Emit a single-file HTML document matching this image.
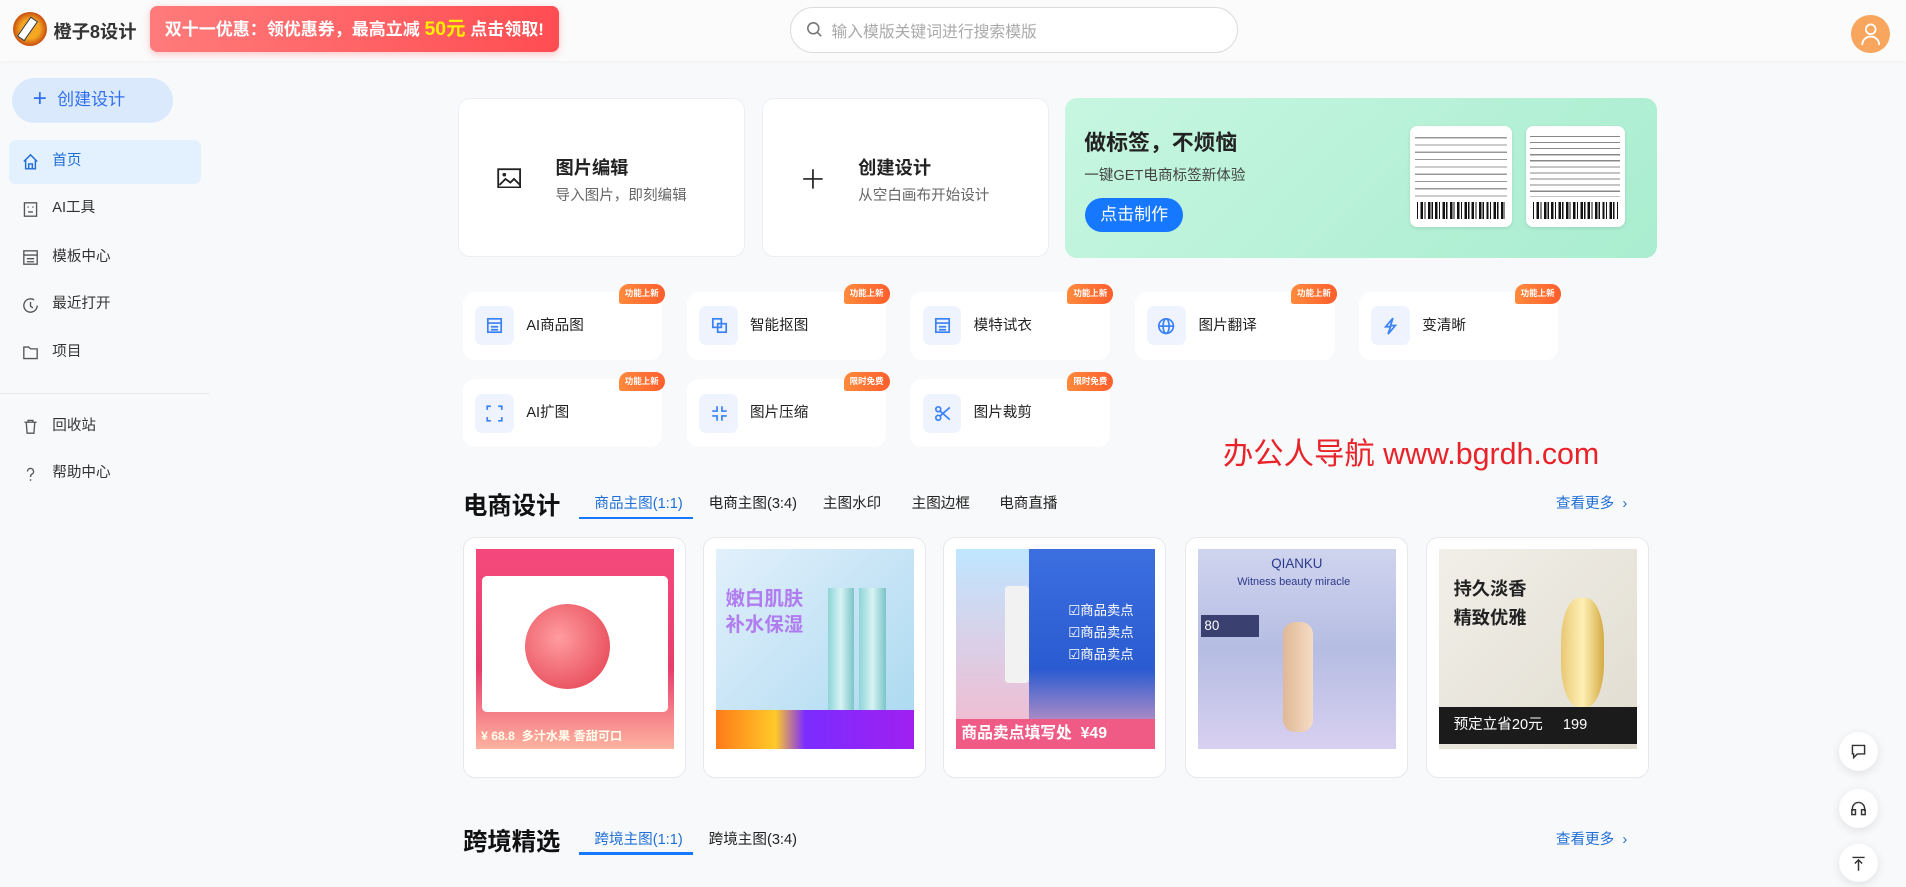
<!DOCTYPE html>
<html><head><meta charset="utf-8">
<style>
html,body{margin:0;padding:0;}
body{width:1568px;height:717px;overflow:hidden;zoom:1.21556;background:#f8f9fb;font-family:"Liberation Sans","Noto Sans CJK SC",sans-serif;color:#222;position:relative}
.a{position:absolute}
.hdr{left:0;top:0;width:1568px;height:50px;background:#fbfbfc;box-shadow:0 1px 3px rgba(0,0,0,.04)}
.promo{left:123px;top:5px;width:337px;height:38px;border-radius:6px;background:linear-gradient(90deg,#ff7b7b,#ff4d52);color:#fff;font-weight:bold;font-size:14px;line-height:38px;text-align:center;box-shadow:0 2px 6px rgba(255,80,80,.3)}
.search{left:650px;top:6px;width:367px;height:36px;border:1px solid #dcdcdc;border-radius:19px;background:#fff}
.nav{left:7px;width:158px;height:36px;line-height:36px;font-size:12px;color:#333;border-radius:6px}
.nav svg{position:absolute;left:11px;top:11px}
.nav span.t{position:absolute;left:36px}
.card{background:#fff;border:1px solid #eceef2;border-radius:10px}
.tool{width:164px;height:56px;background:#fff;border-radius:10px}
.tool .ib{position:absolute;left:10px;top:12px;width:32px;height:32px;background:#eef3fe;border-radius:6px}
.tool .tt{position:absolute;left:52px;top:0;line-height:56px;font-size:12px;color:#222}
.badge{width:38px;height:16px;border-radius:8px 8px 8px 2px;background:linear-gradient(90deg,#ff8a3c,#ff5e2c);color:#fff;font-size:7px;font-weight:bold;line-height:16px;text-align:center;white-space:nowrap;overflow:hidden}
.sec{font-size:20px;font-weight:bold;color:#111}
.tab{font-size:12px;color:#222}
.pc{width:182px;height:196px;background:#fff;border:1px solid #e6e8ec;border-radius:10px}
.pimg{position:absolute;left:10px;top:9px;width:163px;height:164px;overflow:hidden}
.fb{width:32px;height:32px;border-radius:50%;background:#fff;box-shadow:0 2px 8px rgba(0,0,0,.1);text-align:center;line-height:32px;font-size:13px}
.ic{stroke:#3b82f6;fill:none;stroke-width:1.4}
</style></head><body>
<div class="a hdr"></div>
<div class="a" style="left:11px;top:10px;width:28px;height:28px;border-radius:50%;background:radial-gradient(circle,#f5a623 40%,#c2410c 75%,#6b2b0a);"></div>
<div class="a" style="left:19px;top:14px;width:6px;height:18px;background:#fff;border:1px solid #333;transform:rotate(35deg)"></div>
<div class="a" style="left:44px;top:15px;font-size:15px;font-weight:bold;color:#333">橙子8设计</div>
<div class="a promo">双十一优惠：领优惠券，最高立减 <span style="color:#ffee00;font-size:16px">50元</span> 点击领取!</div>
<div class="a search"></div>
<svg class="a" style="left:663px;top:17px" width="14" height="14" viewBox="0 0 14 14"><circle cx="6" cy="6" r="4.5" fill="none" stroke="#777" stroke-width="1.3"/><line x1="9.3" y1="9.3" x2="12.5" y2="12.5" stroke="#777" stroke-width="1.3"/></svg>
<div class="a" style="left:684px;top:16px;font-size:13px;color:#aaa">输入模版关键词进行搜索模版</div>
<div class="a" style="left:1523px;top:12px;width:32px;height:32px;border-radius:50%;background:#f8a55e"></div>
<svg class="a" style="left:1531px;top:18px" width="16" height="20" viewBox="0 0 16 20"><circle cx="8" cy="6" r="4" fill="none" stroke="#fff" stroke-width="1.5"/><path d="M1 19c0-4 3-7 7-7s7 3 7 7" fill="none" stroke="#fff" stroke-width="1.5"/></svg>

<div class="a" style="left:10px;top:64px;width:132px;height:37px;border-radius:19px;background:#dbe9fd;color:#2f6fec;font-size:14px;line-height:37px"><span style="position:absolute;left:17px;font-size:20px;top:-1px">+</span><span style="position:absolute;left:37px">创建设计</span></div>
<div class="a nav" style="top:115px;background:#e3f0fd;color:#1f6fd6"><svg width="14" height="14" viewBox="0 0 14 14"><path d="M1.5 7L7 1.5 12.5 7M3 6v7h8V6M5.5 13V9h3v4" fill="none" stroke="#1f6fd6" stroke-width="1.2"/></svg><span class="t">首页</span></div>
<div class="a nav" style="top:154px"><svg width="14" height="14" viewBox="0 0 14 14"><rect x="2" y="1.5" width="10" height="11" fill="none" stroke="#555" stroke-width="1.1"/><path d="M4.5 5h1M8.5 5h1M5 9h4" stroke="#555" stroke-width="1.1"/></svg><span class="t">AI工具</span></div>
<div class="a nav" style="top:194px"><svg width="14" height="14" viewBox="0 0 14 14"><rect x="1.5" y="1.5" width="11" height="11" fill="none" stroke="#555" stroke-width="1.1"/><path d="M1.5 5h11M4 8h6M4 10.5h6" stroke="#555" stroke-width="1.1"/></svg><span class="t">模板中心</span></div>
<div class="a nav" style="top:233px"><svg width="14" height="14" viewBox="0 0 14 14"><path d="M12.5 7A5.5 5.5 0 1 1 10 2.4" fill="none" stroke="#555" stroke-width="1.1"/><path d="M7 4v3.5l2 1.5" fill="none" stroke="#555" stroke-width="1.1"/></svg><span class="t">最近打开</span></div>
<div class="a nav" style="top:272px"><svg width="14" height="14" viewBox="0 0 14 14"><path d="M1.5 2.5h4l1.5 1.5h5.5v8h-11z" fill="none" stroke="#555" stroke-width="1.1"/></svg><span class="t">项目</span></div>
<div class="a" style="left:0;top:323px;width:172px;height:1px;background:#e8e8e8"></div>
<div class="a nav" style="top:333px"><svg width="14" height="14" viewBox="0 0 14 14"><path d="M2 3.5h10M5 3.5V2h4v1.5M3.5 3.5l.7 9h5.6l.7-9" fill="none" stroke="#555" stroke-width="1.1"/></svg><span class="t">回收站</span></div>
<div class="a nav" style="top:372px"><svg width="14" height="14" viewBox="0 0 14 14"><path d="M4.5 4.5a2.5 2.5 0 1 1 3.5 2.3C7.2 7.2 7 7.8 7 9" fill="none" stroke="#555" stroke-width="1.1"/><circle cx="7" cy="11.5" r=".7" fill="#555"/></svg><span class="t">帮助中心</span></div>

<div class="a card" style="left:377px;top:81px;width:234px;height:129px"></div>
<svg class="a" style="left:409px;top:138px" width="20" height="17" viewBox="0 0 20 17"><rect x="1" y="1" width="18" height="15" fill="none" stroke="#222" stroke-width="1.5"/><circle cx="6" cy="5.5" r="1.5" fill="#222"/><path d="M2 14l5-5 4 3 3-3 5 5" fill="none" stroke="#222" stroke-width="1.5"/></svg>
<div class="a" style="left:457px;top:127px;font-size:15px;font-weight:bold">图片编辑</div>
<div class="a" style="left:457px;top:151px;font-size:12px;color:#666">导入图片，即刻编辑</div>
<div class="a card" style="left:627px;top:81px;width:234px;height:129px"></div>
<svg class="a" style="left:660px;top:138px" width="18" height="18" viewBox="0 0 18 18"><path d="M9 1v16M1 9h16" stroke="#222" stroke-width="1.4"/></svg>
<div class="a" style="left:706px;top:127px;font-size:15px;font-weight:bold">创建设计</div>
<div class="a" style="left:706px;top:151px;font-size:12px;color:#666">从空白画布开始设计</div>
<div class="a" style="left:876px;top:81px;width:487px;height:131px;border-radius:10px;background:linear-gradient(135deg,#c7f6e1,#a9edcf)"></div>
<div class="a" style="left:892px;top:104px;font-size:18px;font-weight:bold;color:#222">做标签，不烦恼</div>
<div class="a" style="left:892px;top:135px;font-size:12px;color:#444">一键GET电商标签新体验</div>
<div class="a" style="left:893px;top:163px;width:80px;height:28px;border-radius:14px;background:#1677ff;color:#fff;font-size:14px;line-height:28px;text-align:center">点击制作</div>
<div class="a" style="left:1160px;top:104px;width:84px;height:83px;background:#fff;border-radius:6px;box-shadow:0 1px 3px rgba(0,0,0,.1);overflow:hidden"><div style="margin:4px;height:54px;background:repeating-linear-gradient(180deg,#fff 0 5px,#999 5px 6px)"></div><div style="margin:2px 6px;height:14px;background:repeating-linear-gradient(90deg,#111 0 1px,#fff 1px 3px,#111 3px 5px,#fff 5px 6px)"></div></div>
<div class="a" style="left:1255px;top:104px;width:82px;height:83px;background:#fff;border-radius:6px;box-shadow:0 1px 3px rgba(0,0,0,.1);overflow:hidden"><div style="margin:4px;height:54px;background:repeating-linear-gradient(180deg,#fff 0 4px,#888 4px 5px)"></div><div style="margin:2px 6px;height:14px;background:repeating-linear-gradient(90deg,#111 0 1px,#fff 1px 3px,#111 3px 5px,#fff 5px 6px)"></div></div>

<!-- tools -->
<div class="a tool" style="left:381px;top:240px"><div class="ib"></div><div class="tt">AI商品图</div></div>
<div class="a tool" style="left:565px;top:240px"><div class="ib"></div><div class="tt">智能抠图</div></div>
<div class="a tool" style="left:749px;top:240px"><div class="ib"></div><div class="tt">模特试衣</div></div>
<div class="a tool" style="left:934px;top:240px"><div class="ib"></div><div class="tt">图片翻译</div></div>
<div class="a tool" style="left:1118px;top:240px"><div class="ib"></div><div class="tt">变清晰</div></div>
<div class="a tool" style="left:381px;top:312px"><div class="ib"></div><div class="tt">AI扩图</div></div>
<div class="a tool" style="left:565px;top:312px"><div class="ib"></div><div class="tt">图片压缩</div></div>
<div class="a tool" style="left:749px;top:312px"><div class="ib"></div><div class="tt">图片裁剪</div></div>
<svg class="a" style="left:400px;top:261px" width="14" height="14"><rect class="ic" x="1.5" y="1.5" width="11" height="11"/><path class="ic" d="M1.5 5h11M4 8h6M4 10.5h6"/></svg>
<svg class="a" style="left:585px;top:261px" width="14" height="14"><rect class="ic" x="1.5" y="1.5" width="7" height="7"/><rect class="ic" x="5.5" y="5.5" width="7" height="7"/></svg>
<svg class="a" style="left:768px;top:261px" width="14" height="14"><rect class="ic" x="1.5" y="1.5" width="11" height="11"/><path class="ic" d="M1.5 5h11M4 8h6M4 10.5h6"/></svg>
<svg class="a" style="left:952px;top:261px" width="15" height="15"><circle class="ic" cx="7.5" cy="7.5" r="6"/><ellipse class="ic" cx="7.5" cy="7.5" rx="2.5" ry="6"/><path class="ic" d="M1.5 7.5h12"/></svg>
<svg class="a" style="left:1137px;top:261px" width="14" height="15"><path class="ic" d="M9 1L3 8h4l-2 6 6-7H7z"/></svg>
<svg class="a" style="left:400px;top:333px" width="14" height="14"><path class="ic" d="M1 4V1h3M10 1h3v3M13 10v3h-3M4 13H1v-3"/></svg>
<svg class="a" style="left:585px;top:333px" width="14" height="14"><path class="ic" d="M5 1v4H1M9 1v4h4M5 13V9H1M9 13V9h4"/></svg>
<svg class="a" style="left:768px;top:333px" width="14" height="14"><circle class="ic" cx="3.5" cy="3.5" r="2"/><circle class="ic" cx="3.5" cy="10.5" r="2"/><path class="ic" d="M5 5l8 7M5 9l8-7"/></svg>
<div class="a badge" style="left:509px;top:234px">功能上新</div>
<div class="a badge" style="left:694px;top:234px">功能上新</div>
<div class="a badge" style="left:878px;top:234px">功能上新</div>
<div class="a badge" style="left:1062px;top:234px">功能上新</div>
<div class="a badge" style="left:1246px;top:234px">功能上新</div>
<div class="a badge" style="left:509px;top:306px">功能上新</div>
<div class="a badge" style="left:694px;top:306px">限时免费</div>
<div class="a badge" style="left:878px;top:306px">限时免费</div>

<div class="a" style="left:1006px;top:353px;font-size:25px;color:#e8242a">办公人导航 www.bgrdh.com</div>

<div class="a sec" style="left:381px;top:401px">电商设计</div>
<div class="a tab" style="left:489px;top:405px;color:#1f6fd6">商品主图(1:1)</div>
<div class="a tab" style="left:583px;top:405px">电商主图(3:4)</div>
<div class="a tab" style="left:677px;top:405px">主图水印</div>
<div class="a tab" style="left:750px;top:405px">主图边框</div>
<div class="a tab" style="left:822px;top:405px">电商直播</div>
<div class="a" style="left:476px;top:425px;width:94px;height:2px;background:#1677ff"></div>
<div class="a" style="left:1280px;top:405px;font-size:12px;color:#1f6fd6">查看更多 &nbsp;›</div>

<div class="a pc" style="left:381px;top:442px"><div class="pimg" style="background:linear-gradient(180deg,#f5497c,#e83e6c 60%,#ffb3a0)"><div class="a" style="left:5px;top:22px;width:153px;height:112px;background:#fff;border-radius:4px"></div><div class="a" style="left:40px;top:45px;width:70px;height:70px;border-radius:50%;background:radial-gradient(circle at 40% 40%,#ff9ca0,#e23a4a)"></div><div class="a" style="left:4px;top:146px;font-size:10px;color:#ffe;font-weight:bold;white-space:nowrap">¥ 68.8 &nbsp;多汁水果 香甜可口</div></div></div>
<div class="a pc" style="left:578px;top:442px"><div class="pimg" style="background:linear-gradient(135deg,#e2f0fb,#a8d8f0)"><div class="a" style="left:8px;top:30px;font-size:16px;font-weight:bold;color:#b07cf0;line-height:22px">嫩白肌肤<br>补水保湿</div><div class="a" style="left:92px;top:32px;width:22px;height:110px;background:linear-gradient(90deg,#8fd4d8,#d6f3f3,#7bc4c8)"></div><div class="a" style="left:118px;top:32px;width:22px;height:110px;background:linear-gradient(90deg,#8fd4d8,#d6f3f3,#7bc4c8)"></div><div class="a" style="left:0;top:132px;width:163px;height:32px;background:linear-gradient(90deg,#ff7a1a,#ffca28 30%,#7b2cff 45%,#a020f0)"></div></div></div>
<div class="a pc" style="left:776px;top:442px"><div class="pimg" style="background:linear-gradient(180deg,#3c6fe0,#2a5bd0 60%,#f4a6c0)"><div class="a" style="left:0;top:0;width:60px;height:164px;background:linear-gradient(180deg,#bfe6ff,#f7b7cc)"></div><div class="a" style="left:40px;top:30px;width:20px;height:80px;background:#f2f2f2;border-radius:3px"></div><div class="a" style="left:92px;top:42px;font-size:11px;color:#fff;line-height:18px">☑商品卖点<br>☑商品卖点<br>☑商品卖点</div><div class="a" style="left:0;top:140px;width:163px;height:24px;background:#f05b86;color:#fff;font-weight:bold;font-size:13px;line-height:24px;padding-left:4px">商品卖点填写处 &nbsp;¥49</div></div></div>
<div class="a pc" style="left:975px;top:442px"><div class="pimg" style="background:linear-gradient(180deg,#cfd4ee,#b5bde3 50%,#d8d0f0)"><div class="a" style="left:60px;top:6px;font-size:11px;color:#2d3a8c">QIANKU</div><div class="a" style="left:32px;top:22px;font-size:9px;color:#2d3a8c">Witness beauty miracle</div><div class="a" style="left:2px;top:54px;width:48px;height:18px;background:#3a4070;color:#fff;font-size:11px;line-height:18px">&nbsp;80</div><div class="a" style="left:70px;top:60px;width:24px;height:90px;background:linear-gradient(90deg,#e0b896,#f5dcc4);border-radius:10px"></div></div></div>
<div class="a pc" style="left:1173px;top:442px"><div class="pimg" style="background:linear-gradient(135deg,#f1efe8,#e0dcd0)"><div class="a" style="left:12px;top:20px;font-size:15px;font-weight:bold;color:#222;line-height:24px">持久淡香<br>精致优雅</div><div class="a" style="left:100px;top:40px;width:36px;height:90px;border-radius:40%;background:linear-gradient(90deg,#e9c875,#fff0b5,#d4aa45)"></div><div class="a" style="left:0;top:130px;width:163px;height:30px;background:#1b1b1b;color:#fff;font-size:12px;line-height:30px;padding-left:12px">预定立省20元 &nbsp;&nbsp;&nbsp;&nbsp;199</div></div></div>

<div class="a sec" style="left:381px;top:677px">跨境精选</div>
<div class="a tab" style="left:489px;top:681px;color:#1f6fd6">跨境主图(1:1)</div>
<div class="a tab" style="left:583px;top:681px">跨境主图(3:4)</div>
<div class="a" style="left:476px;top:701px;width:94px;height:2px;background:#1677ff"></div>
<div class="a" style="left:1280px;top:681px;font-size:12px;color:#1f6fd6">查看更多 &nbsp;›</div>

<div class="a fb" style="left:1513px;top:602px"><svg width="14" height="14" style="margin-top:9px" viewBox="0 0 14 14"><path d="M2 2h10v7H6l-3 3V9H2z" fill="none" stroke="#333" stroke-width="1.2"/></svg></div>
<div class="a fb" style="left:1513px;top:649px"><svg width="14" height="14" style="margin-top:9px" viewBox="0 0 14 14"><path d="M2 9V7a5 5 0 0 1 10 0v2" fill="none" stroke="#333" stroke-width="1.2"/><rect x="1.5" y="8" width="3" height="4" fill="none" stroke="#333" stroke-width="1.2"/><rect x="9.5" y="8" width="3" height="4" fill="none" stroke="#333" stroke-width="1.2"/></svg></div>
<div class="a fb" style="left:1513px;top:694px"><svg width="14" height="14" style="margin-top:9px" viewBox="0 0 14 14"><path d="M2 2h10M7 4v9M4 7l3-3 3 3" fill="none" stroke="#333" stroke-width="1.2"/></svg></div>
</body></html>
